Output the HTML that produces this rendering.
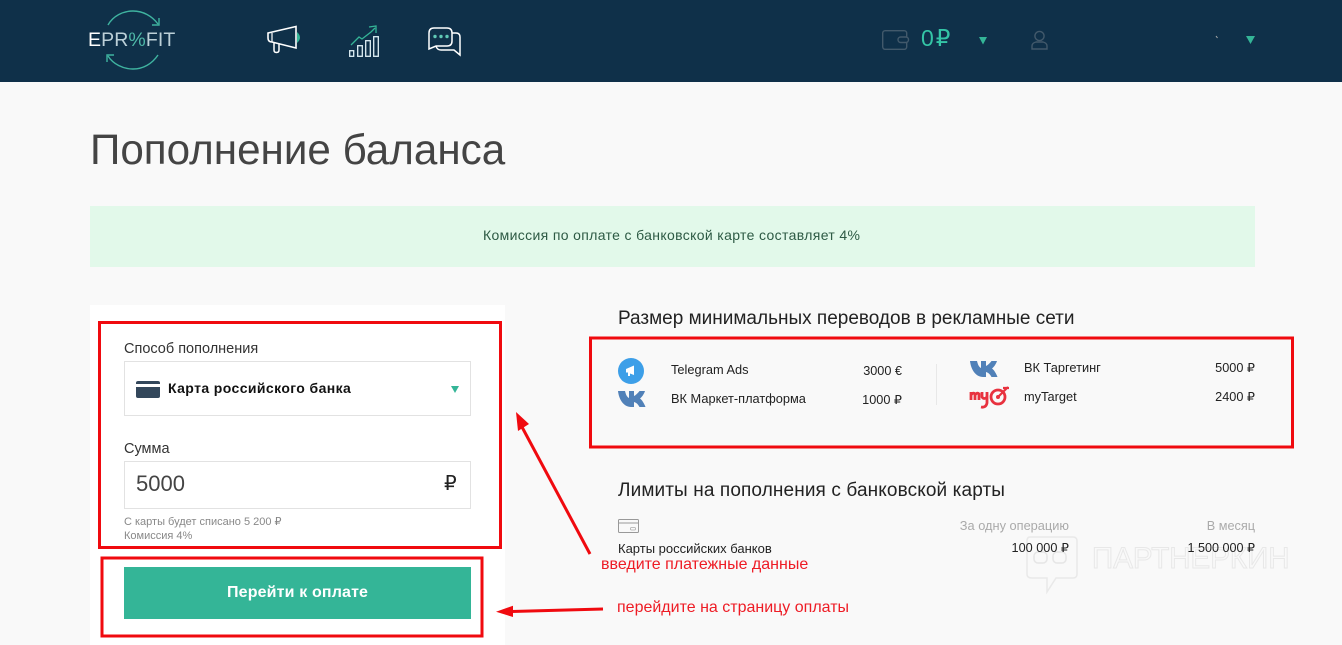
<!DOCTYPE html>
<html lang="ru"><head><meta charset="utf-8"><title>Пополнение баланса</title>
<style>
html,body{margin:0;padding:0;width:1342px;height:645px;overflow:hidden;background:#f9f9f9;font-family:"Liberation Sans","DejaVu Sans",sans-serif}
.t{position:absolute;white-space:nowrap;line-height:1;color:#222}
.b{position:absolute}
svg{position:absolute;left:0;top:0}
</style></head><body>
<div class="b" style="left:0;top:0;width:1342px;height:82px;background:#0f3049"></div>
<div class="b" style="left:90px;top:206px;width:1165px;height:61px;background:#e2f9ea"></div>
<div class="b" style="left:90px;top:305px;width:415px;height:340px;background:#fff"></div>
<div class="b" style="left:124px;top:361px;width:345px;height:53px;border:1px solid #e2e2e2"></div>
<div class="b" style="left:124px;top:461px;width:345px;height:46px;border:1px solid #e2e2e2"></div>
<div class="b" style="left:124px;top:567px;width:347px;height:52px;background:#34b597"></div>

<div class="t" style="left:1092px;top:544px;font-size:29.5px;color:transparent;-webkit-text-stroke:1px #e8e8e8">ПАРТНЕРКИН</div>

<svg width="1342" height="645" viewBox="0 0 1342 645" fill="none">
<!-- logo -->
<path d="M108 25C113 16 123 11 133 11C143 11 152 16 158 24" stroke="#3fb3a0" stroke-width="1.4"/>
<path d="M152 25L159 25L159 18" stroke="#3fb3a0" stroke-width="1.4"/>
<path d="M158 55C152 64 143 69 133 69C123 69 113 64 108 56" stroke="#3fb3a0" stroke-width="1.4"/>
<path d="M114 55L107 55L107 62" stroke="#3fb3a0" stroke-width="1.4"/>
<!-- megaphone -->
<path d="M268 33L296 26.500V48L272 42Q268 42 268 38Z" stroke="#fff" stroke-width="1.600" fill="#0f3049"/>
<path d="M272 33V42" stroke="#fff" stroke-width="1.200"/>
<path d="M274 43V50Q274 52.500 276.500 52.500Q279 52.500 279 50V44" stroke="#fff" stroke-width="1.500"/>
<path d="M297 32Q303 37.500 297 43Z" fill="#34b597"/>
<!-- chart -->
<g stroke="#dff0f5" stroke-width="1.300"><rect x="349.700" y="50.700" width="4" height="5.600"/><rect x="357.700" y="45.700" width="4.600" height="10.600"/><rect x="365.700" y="40.700" width="4.600" height="15.600"/><rect x="373.700" y="36.700" width="4.600" height="19.600"/></g>
<path d="M351 45L359 37L362 39L371 32L375 28" stroke="#34b597" stroke-width="1.300"/><path d="M369 27L376 26L376 33" stroke="#34b597" stroke-width="1.300"/>
<!-- chat -->
<path d="M450 33H456Q460 33 460 37V55L454 50H441Q437 50 436 46" stroke="#fff" stroke-width="1.500"/>
<path d="M434 28H447Q452 28 452 33V41Q452 46 447 46H436L429 49V33Q429 28 434 28Z" stroke="#fff" stroke-width="1.500" fill="#0f3049"/>
<circle cx="435" cy="36.500" r="1.700" fill="#5fc8b5"/><circle cx="441" cy="36.500" r="1.700" fill="#5fc8b5"/><circle cx="447" cy="36.500" r="1.700" fill="#5fc8b5"/>
<!-- wallet -->
<rect x="882.700" y="30.700" width="24" height="18.600" rx="2.500" stroke="#42596b" stroke-width="1.400"/>
<rect x="898" y="37" width="10.500" height="5.500" rx="2.700" fill="#0f3049" stroke="#42596b" stroke-width="1.400"/>
<path d="M979 37H987L983 44.500Z" fill="#34b597"/>
<path d="M1246 36H1255L1250.500 44Z" fill="#34b597"/>
<!-- user -->
<circle cx="1039.500" cy="36" r="4.600" stroke="#42596b" stroke-width="1.400"/>
<path d="M1032 49V46Q1032 43 1036 42H1043Q1047 43 1047 46V49Z" stroke="#42596b" stroke-width="1.400"/>
<path d="M1216 36L1217.500 38" stroke="#aaa" stroke-width="1"/>
<!-- select card -->
<rect x="136" y="381" width="24" height="17" rx="2" fill="#33475b"/>
<rect x="136" y="384" width="24" height="3" fill="#fff"/>
<path d="M451 386H459L455 393Z" fill="#34b597"/>
<!-- telegram -->
<circle cx="631" cy="371" r="13" fill="#3d9fe8"/>
<path d="M626 369L634 365.500V375L630 373.500V376H628V372.500H626Z" fill="#fff"/>
<!-- vk -->
<path d="M618 391H625C626 395 627 397 629 398V391H634V396C636 395 638 393 639.500 391H645C644 394 642 397 640 398.500C642 400 644 403 645.500 407H639.500C638 404 636 402.500 634 402V407H631C624 407 619 400 618 391Z" fill="#5181b8"/>
<path d="M970 361H977C978 365 979 367 981 368V361H986V366C988 365 990 363 991.500 361H997C996 364 994 367 992 368.500C994 370 996 373 997.500 377H991.500C990 374 988 372.500 986 372V377H983C976 377 971 370 970 361Z" fill="#5181b8"/>
<!-- mytarget -->
<path d="M971 392V400M971 395Q973 392 975 394V400M975 395Q977 392 979 394V400M982 392V397Q984 400 987 397M987 392V403Q986 408 981 407" stroke="#e8323f" stroke-width="2.800"/>
<circle cx="998" cy="397" r="7" stroke="#e8323f" stroke-width="2.800"/><circle cx="998" cy="397" r="2" fill="#e8323f"/><path d="M998 397L1008 387M1003 388H1009" stroke="#e8323f" stroke-width="2.200"/>
<!-- divider -->
<path d="M936.500 364V405" stroke="#e8e8e8"/>
<!-- limit card -->
<rect x="618.500" y="519.500" width="20" height="13" rx="1" stroke="#999"/>
<path d="M618 523H639" stroke="#999" stroke-width="1"/><rect x="630.500" y="527.500" width="5" height="2.500" rx="1" stroke="#aaa" stroke-width=".8"/>
<!-- watermark -->
<path d="M1030 537H1073Q1077 537 1077 541V574Q1077 578 1073 578H1056L1047 592V578H1032Q1027 578 1027 574V541Q1027 537 1030 537Z" stroke="#e9e9e9" stroke-width="1.500"/>
<rect x="1034" y="552" width="13" height="11" rx="4" stroke="#e6e6e6" stroke-width="1.500"/><rect x="1053" y="552" width="13" height="11" rx="4" stroke="#e6e6e6" stroke-width="1.500"/>
<!-- red frames -->
<rect x="99.500" y="322.500" width="401" height="225" stroke="#f00a0f" stroke-width="3"/>
<rect x="102" y="558" width="380" height="78" stroke="#f00a0f" stroke-width="3"/>
<rect x="590.500" y="338" width="702" height="109" stroke="#f00a0f" stroke-width="3"/>
<!-- arrows -->
<path d="M590 554L522 427" stroke="#f00a0f" stroke-width="3"/>
<path d="M516 412L529 424L518 431Z" fill="#f00a0f"/>
<path d="M603 609L512 611.500" stroke="#f00a0f" stroke-width="3"/>
<path d="M496 611.700L513 605.700V617Z" fill="#f00a0f"/>
</svg>

<div class="t" style="left:88px;top:31px;font-size:19.500px;color:#bcd0d8;letter-spacing:.1px"><span style="color:#fff">E</span>PR<span style="color:#4fb8a8">%</span>FIT</div>
<div class="t" style="left:921px;top:27px;font-size:23px;color:#34c5a6;letter-spacing:2px">0₽</div>

<div class="t" style="left:90px;top:129px;font-size:42.200px;color:#444">Пополнение баланса</div>
<div class="t" style="left:483px;top:228px;font-size:14px;color:#2d5a44;letter-spacing:.35px">Комиссия по оплате с банковской карте составляет 4%</div>

<div class="t" style="left:124px;top:341.500px;font-size:14.500px;color:#333">Способ пополнения</div>
<div class="t" style="left:168px;top:381px;font-size:14px;font-weight:bold;color:#111;letter-spacing:.4px">Карта российского банка</div>
<div class="t" style="left:124px;top:441.500px;font-size:14.500px;color:#333">Сумма</div>
<div class="t" style="left:136px;top:473px;font-size:22px;color:#444">5000</div>
<div class="t" style="left:444px;top:474px;font-size:20px;color:#222">₽</div>
<div class="t" style="left:124px;top:517px;font-size:11px;color:#888">С карты будет списано 5 200 ₽</div>
<div class="t" style="left:124px;top:531px;font-size:11px;color:#888">Комиссия 4%</div>
<div class="t" style="left:227px;top:585px;font-size:16px;font-weight:bold;color:#fff;letter-spacing:.15px">Перейти к оплате</div>

<div class="t" style="left:618px;top:309px;font-size:19px;color:#222">Размер минимальных переводов в рекламные сети</div>
<div class="t" style="left:671px;top:364px;font-size:12.800px">Telegram Ads</div>
<div class="t" style="left:671px;top:393px;font-size:12.800px">ВК Маркет-платформа</div>
<div class="t" style="right:440px;top:365px;font-size:12.700px">3000 €</div>
<div class="t" style="right:440px;top:394px;font-size:12.700px">1000 ₽</div>
<div class="t" style="left:1024px;top:362px;font-size:12.800px">ВК Таргетинг</div>
<div class="t" style="left:1024px;top:391px;font-size:12.800px">myTarget</div>
<div class="t" style="right:87px;top:362px;font-size:12.700px">5000 ₽</div>
<div class="t" style="right:87px;top:391px;font-size:12.700px">2400 ₽</div>

<div class="t" style="left:618px;top:481px;font-size:19px;color:#222;letter-spacing:.12px">Лимиты на пополнения с банковской карты</div>
<div class="t" style="right:273px;top:520px;font-size:12.800px;color:#aaa">За одну операцию</div>
<div class="t" style="right:87px;top:520px;font-size:12.700px;color:#aaa">В месяц</div>
<div class="t" style="left:618px;top:542px;font-size:13px">Карты российских банков</div>
<div class="t" style="right:273px;top:542px;font-size:12.700px">100 000 ₽</div>
<div class="t" style="right:87px;top:542px;font-size:12.600px">1 500 000 ₽</div>

<div class="t" style="left:601px;top:557px;font-size:16px;color:#ee1c25">введите платежные данные</div>
<div class="t" style="left:617px;top:600px;font-size:16px;color:#ee1c25">перейдите на страницу оплаты</div>
</body></html>
